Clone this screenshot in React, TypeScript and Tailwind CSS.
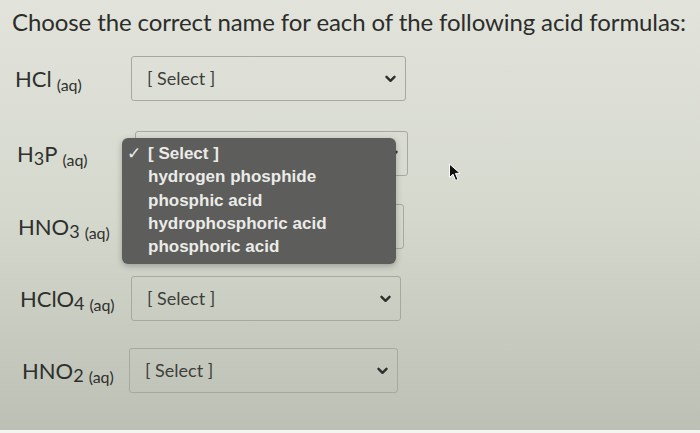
const rows = [
  { f: "HCl", sub: "", ml: "ml-[15px]", lw: "w-[116px]", sw: "w-[275px]", mt: "mt-[18px]", hidden: false },
  { f: "H", sub: "3", tail: "P", ml: "ml-[17px]", lw: "w-[118px]", sw: "w-[273px]", mt: "mt-[30px]", hidden: true },
  { f: "HNO", sub: "3", ml: "ml-[18px]", lw: "w-[116px]", sw: "w-[270px]", mt: "mt-[28px]", hidden: true },
  { f: "HClO", sub: "4", ml: "ml-[20px]", lw: "w-[111px]", sw: "w-[270px]", mt: "mt-[27px]", hidden: false },
  { f: "HNO", sub: "2", ml: "ml-[22px]", lw: "w-[107px]", sw: "w-[269px]", mt: "mt-[27px]", hidden: false },
]

function Chevron() {
  return (
    <svg width="11" height="8" viewBox="0 0 11 8" className="text-[#2f302d]">
      <path d="M1.5 1.8 L5.5 5.8 L9.5 1.8" fill="none" stroke="currentColor" strokeWidth="2.4" strokeLinecap="round" strokeLinejoin="round" />
    </svg>
  )
}

export default function App() {
  return (
    <div className="relative h-[433px] w-[700px] overflow-hidden bg-gradient-to-b from-[#e2e4dc] via-[#d5d8cd] to-[#bcbfb4] font-['Lato','Liberation_Sans',sans-serif] text-[#3a3b38]">
      <h1 className="pl-[12px] pt-[6px] text-[24px] leading-[32px] tracking-[-0.1px] text-[#2c2d2a]">
        Choose the correct name for each of the following acid formulas:
      </h1>

      <div className="flex flex-col">
        {rows.map((r, i) => (
          <div key={i} className={`flex items-center ${r.mt}`}>
            <div className={`${r.ml} ${r.lw} shrink-0 whitespace-nowrap text-[22px] text-[#2f302d]`}>
              {r.f}
              {r.sub && <span className="text-[18px] relative top-[3px]">{r.sub}</span>}
              {r.tail}
              <span className="ml-[5px] text-[16px] relative top-[4px]">(aq)</span>
            </div>
            <div className={`${r.sw} h-[45px] flex items-center justify-between rounded-[3px] border border-[#a6a99e] pl-[15px] pr-[9px]`}>
              <span className="text-[18px] text-[#3d3e3b]">{r.hidden ? "" : "[ Select ]"}</span>
              <Chevron />
            </div>
          </div>
        ))}
      </div>

      {/* open dropdown menu */}
      <div className="absolute left-[122px] top-[138px] w-[274px] h-[126px] rounded-[6px] bg-[#5d5e5b] shadow-[0_2px_6px_rgba(0,0,0,0.25)] pt-[4px] font-['Liberation_Sans',sans-serif] font-bold text-[17px] leading-[23.3px] text-[#ebebe8]">
        <div className="flex items-center">
          <span className="w-[26px] pl-[5px] text-[17px] font-normal">✓</span>
          <span>[ Select ]</span>
        </div>
        <div className="pl-[26px]">hydrogen phosphide</div>
        <div className="pl-[26px]">phosphic acid</div>
        <div className="pl-[26px]">hydrophosphoric acid</div>
        <div className="pl-[26px]">phosphoric acid</div>
      </div>

      {/* mouse cursor */}
      <svg className="absolute left-[448px] top-[163px]" width="14" height="19" viewBox="0 0 14 19">
        <path d="M1.5 1 L1.5 14.5 L5 11.2 L7.6 17.5 L10 16.4 L7.4 10.4 L12.2 10.4 Z" fill="#111" stroke="#fff" strokeWidth="1" />
      </svg>

      <div className="absolute bottom-0 left-0 h-[3px] w-full bg-[#f4f4f0]" />
    </div>
  )
}
